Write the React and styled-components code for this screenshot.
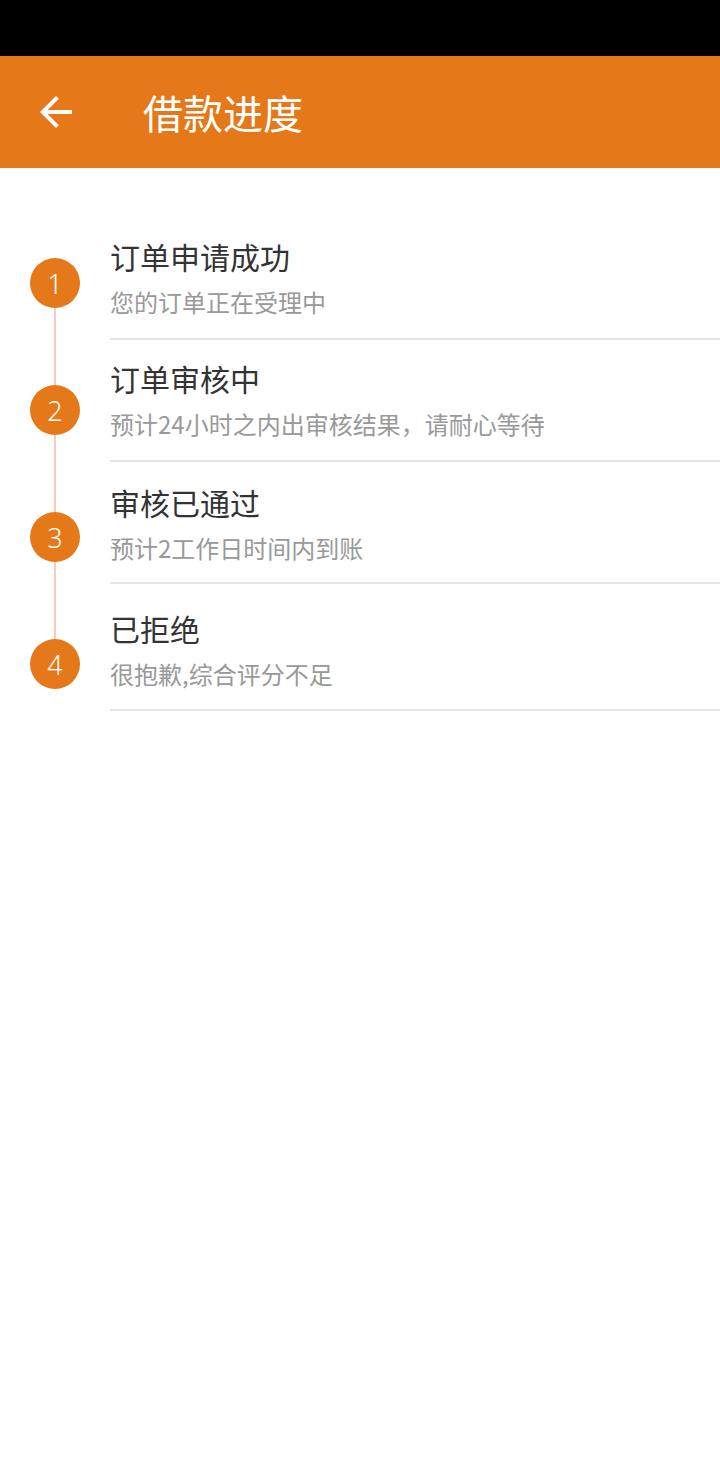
import React from 'react';
import styled, { createGlobalStyle } from 'styled-components';

const GlobalStyle = createGlobalStyle`
	html, body {
		margin: 0;
		padding: 0;
		background: #fff;
	}
	body {
		font-family: "Noto Sans CJK SC", "Noto Sans", sans-serif;
	}
`;

const ORANGE = '#e57818';

const Page = styled.div`
	width: 720px;
	min-height: 1460px;
	background: #fff;
`;

const StatusBar = styled.div`
	height: 56px;
	background: #000;
`;

const Header = styled.div`
	height: 112px;
	background: ${ORANGE};
	display: flex;
	align-items: center;
`;

const BackButton = styled.div`
	width: 48px;
	height: 48px;
	margin-left: 32px;
	display: flex;
	align-items: center;
	justify-content: center;
`;

const Title = styled.div`
	margin-left: 63px;
	color: #fff;
	font-size: 40px;
	line-height: 1;
`;

const Body = styled.div`
	display: flex;
	padding-top: 50px;
`;

const Timeline = styled.div`
	width: 110px;
	flex-shrink: 0;
	display: flex;
	flex-direction: column;
	align-items: center;
	padding-top: 40px;
`;

const Dot = styled.div`
	width: 50px;
	height: 50px;
	border-radius: 50%;
	background: ${ORANGE};
	color: #fff;
	font-size: 27px;
	font-weight: 300;
	line-height: 52px;
	text-align: center;
	font-family: "Noto Sans", sans-serif;
`;

const Connector = styled.div`
	width: 2px;
	height: 77px;
	background: #f9cbb6;
`;

const List = styled.div`
	flex: 1;
	display: flex;
	flex-direction: column;
`;

const Row = styled.div`
	height: ${p => p.$height}px;
	padding-top: ${p => p.$top}px;
	box-sizing: border-box;
	border-bottom: 2px solid #e6e6e6;
`;

const RowTitle = styled.div`
	font-size: 30px;
	line-height: 36px;
	color: #333;
`;

const RowText = styled.div`
	margin-top: 14px;
	font-size: 24px;
	line-height: 28px;
	color: #999;
`;

const steps = [
	{ title: '订单申请成功', text: '您的订单正在受理中', top: 20, height: 122 },
	{ title: '订单审核中', text: '预计24小时之内出审核结果，请耐心等待', top: 20, height: 122 },
	{ title: '审核已通过', text: '预计2工作日时间内到账', top: 22, height: 122 },
	{ title: '已拒绝', text: '很抱歉,综合评分不足', top: 26, height: 127 },
];

function BackArrow() {
	return (
		<svg width="48" height="48" viewBox="0 0 24 24">
			<path fill="#fff" d="M20 11H7.83l5.59-5.59L12 4l-8 8 8 8 1.41-1.41L7.83 13H20v-2z" />
		</svg>
	);
}

function App() {
	return (
		<Page>
			<GlobalStyle />
			<StatusBar />
			<Header>
				<BackButton><BackArrow /></BackButton>
				<Title>借款进度</Title>
			</Header>
			<Body>
				<Timeline>
					{steps.map((s, i) => (
						<React.Fragment key={i}>
							{i > 0 && <Connector />}
							<Dot>{i + 1}</Dot>
						</React.Fragment>
					))}
				</Timeline>
				<List>
					{steps.map((s, i) => (
						<Row key={i} $top={s.top} $height={s.height}>
							<RowTitle>{s.title}</RowTitle>
							<RowText>{s.text}</RowText>
						</Row>
					))}
				</List>
			</Body>
		</Page>
	);
}

export default App;
